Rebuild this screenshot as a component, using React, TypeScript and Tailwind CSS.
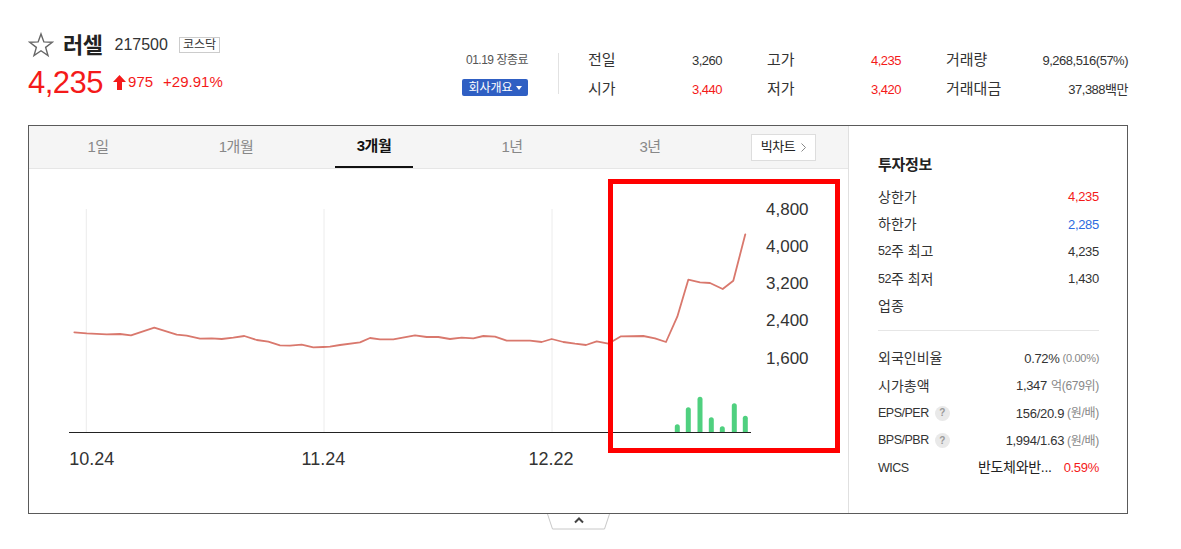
import React from "react"

const LINE =
  "45.3,163.3 57.7,164.3 77.7,165.3 91,165 102,166.3 125.3,158.7 147.7,165.7 157.7,166.7 171,169.7 182.7,169.3 192.7,170 204.3,168.7 215.3,167 227.7,171 239.3,172.7 251,176.3 261,176.7 272.7,175.7 284.3,178.3 294.3,178 301,177.7 311,176 331,173.3 341,169 351,170.3 364.3,170.3 386,166.3 397.7,168 409.3,168 421,170 432.7,168.7 444.3,169.3 454.3,167 466,167.7 477.7,171.7 501,171.7 512.7,173 522.7,170 534.3,173 546,174.7 557,176 567.7,172.3 579.3,174.7 592,167.3 614.3,167 626,169.3 637,173 648.3,147.7 659.3,110.7 671,113.3 681,114 693.7,120 704.3,111.7 716.3,65.3"

const BARS: [number, number][] = [
  [648.3, 255.3],
  [659.3, 238.3],
  [671, 227.7],
  [682.3, 248.3],
  [693.3, 257.3],
  [705.3, 234.3],
  [716.3, 246.7],
]

const Y_LABELS = [
  ["4,800", 40.3],
  ["4,000", 77],
  ["3,200", 114.3],
  ["2,400", 151.7],
  ["1,600", 189.3],
] as const

const X_LABELS = [
  ["10.24", 40.3],
  ["11.24", 272.5],
  ["12.22", 499.5],
] as const

const TABS = ["1일", "1개월", "3개월", "1년", "3년"]

function StarIcon() {
  return (
    <svg width="26" height="26" viewBox="0 0 24 24" className="shrink-0">
      <polygon
        points="12,1.8 14.65,9.16 22.46,9.4 16.28,14.19 18.47,21.7 12,17.3 5.53,21.7 7.72,14.19 1.54,9.4 9.35,9.16"
        fill="none"
        stroke="#666"
        strokeWidth="1.3"
        strokeLinejoin="miter"
      />
    </svg>
  )
}

function UpArrow() {
  return (
    <svg width="13" height="15" viewBox="0 0 13 15" className="shrink-0">
      <path d="M6.5 0 L13 7 H9 V15 H4 V7 H0 Z" fill="#f41a1a" />
    </svg>
  )
}

function Help() {
  return (
    <span className="ml-[6px] inline-flex h-[15px] w-[15px] items-center justify-center rounded-full bg-[#e9e9e9] text-[10px] font-bold leading-none text-[#9a9a9a]">
      ?
    </span>
  )
}

function Stat({ label, value, red, w }: { label: string; value: string; red?: boolean; w: string }) {
  return (
    <div className={`flex h-[29px] items-center justify-between ${w}`}>
      <span className="text-[15px] text-[#333]">{label}</span>
      <span className={`text-[13px] tracking-[-0.5px] ${red ? "text-[#f41a1a]" : "text-[#333]"}`}>
        {value}
      </span>
    </div>
  )
}

function InfoRow({ label, children }: { label: React.ReactNode; children: React.ReactNode }) {
  return (
    <div className="flex h-[27.3px] items-center justify-between text-[13px] text-[#333]">
      <span className="flex items-center text-[14px]">{label}</span>
      <span className="flex items-center tracking-[-0.3px]">{children}</span>
    </div>
  )
}

function Latin({ children }: { children: React.ReactNode }) {
  return <span className="text-[12.5px] tracking-[-0.5px]">{children}</span>
}

export default function App() {
  return (
    <div className="relative h-[549px] w-[1181px] overflow-hidden bg-white font-['Liberation_Sans','Noto_Sans_CJK_KR',sans-serif] text-[#333]">
      <div className="ml-[28px] w-[1100px] pt-[30px]">
        {/* header */}
        <header className="flex h-[95px] justify-between">
          <div className="flex flex-col">
            <div className="flex h-[30px] items-center">
              <StarIcon />
              <span className="ml-[9px] text-[22px] font-bold tracking-[-0.5px] text-[#222]">러셀</span>
              <span className="ml-[12px] text-[16px] text-[#333]">217500</span>
              <span className="ml-[11px] flex h-[16px] items-center border border-[#ccc] px-[3px] text-[12px] leading-none text-[#333]">
                코스닥
              </span>
            </div>
            <div className="mt-[4px] flex h-[36px] items-center text-[#f41a1a]">
              <span className="text-[31px] leading-none tracking-[-0.5px]">4,235</span>
              <span className="ml-[10px] flex items-center">
                <UpArrow />
                <span className="ml-[2px] text-[15px]">975</span>
              </span>
              <span className="ml-[10px] text-[15px]">+29.91%</span>
            </div>
          </div>

          <div className="flex items-start pt-[16px]">
            <div className="flex flex-col items-end">
              <span className="text-[12px] leading-[29px] tracking-[-0.5px] text-[#555]">01.19 장종료</span>
              <button className="mt-[4px] flex h-[17px] w-[66px] items-center justify-center gap-[3px] rounded-[2px] bg-[#2f5fc3] text-[12px] leading-none text-white">
                회사개요
                <svg width="6" height="4" viewBox="0 0 6 4">
                  <path d="M0 0 H6 L3 4 Z" fill="#fff" />
                </svg>
              </button>
            </div>
            <div className="ml-[30px] mt-[7px] h-[41px] w-px bg-[#e2e2e2]" />
            <div className="ml-[29px] flex flex-col">
              <Stat label="전일" value="3,260" w="w-[134px]" />
              <Stat label="시가" value="3,440" red w="w-[134px]" />
            </div>
            <div className="ml-[45px] flex flex-col">
              <Stat label="고가" value="4,235" red w="w-[134px]" />
              <Stat label="저가" value="3,420" red w="w-[134px]" />
            </div>
            <div className="ml-[45px] flex flex-col">
              <Stat label="거래량" value="9,268,516(57%)" w="w-[182px]" />
              <Stat label="거래대금" value="37,388백만" w="w-[182px]" />
            </div>
          </div>
        </header>

        {/* chart box */}
        <section className="flex h-[389px] border border-[#5a5a5a]">
          <div className="flex w-[819px] flex-col">
            <div className="flex h-[43px] items-center border-b border-[#e6e6e6] bg-[#f5f5f5]">
              {TABS.map((t) => (
                <div key={t} className="flex h-full w-[138px] justify-center">
                  {t === "3개월" ? (
                    <div className="flex h-full w-[78px] items-center justify-center border-b-2 border-[#111] text-[15px] font-bold tracking-[-0.5px] text-[#111]">
                      {t}
                    </div>
                  ) : (
                    <div className="flex h-full items-center text-[15px] tracking-[-0.5px] text-[#888]">{t}</div>
                  )}
                </div>
              ))}
              <button className="ml-[32px] flex h-[27px] w-[65px] items-center justify-center gap-[6px] border border-[#ddd] bg-white text-[13px] tracking-[-0.5px] text-[#222]">
                빅차트
                <svg width="5" height="9" viewBox="0 0 5 9">
                  <path d="M0.5 0.5 L4.5 4.5 L0.5 8.5" fill="none" stroke="#888" strokeWidth="1" />
                </svg>
              </button>
            </div>

            <div className="relative flex-1">
              <svg width="819" height="344" viewBox="0 0 819 344" className="block">
                {[57.3, 295, 523].map((x) => (
                  <line key={x} x1={x} y1="40" x2={x} y2="263" stroke="#ececec" strokeWidth="1" />
                ))}
                <polyline
                  points={LINE}
                  fill="none"
                  stroke="#d9786d"
                  strokeWidth="1.8"
                  strokeLinejoin="round"
                  strokeLinecap="round"
                />
                {BARS.map(([x, top]) => (
                  <path
                    key={x}
                    d={`M${x - 2.5} 263 V${top + 2.5} A2.5 2.5 0 0 1 ${x + 2.5} ${top + 2.5} V263 Z`}
                    fill="#4fd07f"
                  />
                ))}
                <line x1="40" y1="263.5" x2="722" y2="263.5" stroke="#222" strokeWidth="1" />
                {Y_LABELS.map(([t, y]) => (
                  <text
                    key={t}
                    x="737"
                    y={y}
                    dominantBaseline="central"
                    fontSize="17"
                    fill="#333"
                    fontFamily="Liberation Sans, sans-serif"
                  >
                    {t}
                  </text>
                ))}
                {X_LABELS.map(([t, x]) => (
                  <text
                    key={t}
                    x={x}
                    y="289.5"
                    dominantBaseline="central"
                    fontSize="18"
                    fill="#333"
                    fontFamily="Liberation Sans, sans-serif"
                  >
                    {t}
                  </text>
                ))}
              </svg>
              <div className="absolute left-[579px] top-[10px] h-[274px] w-[232px] border-[5px] border-[#ff0000]" />
            </div>
          </div>

          <div className="flex-1 border-l border-[#e0e0e0] pl-[29px] pr-[28px] pt-[29px]">
            <div className="h-[20px] text-[15px] font-bold leading-[20px] tracking-[-0.3px] text-[#222]">투자정보</div>
            <div className="mt-[8.6px]">
              <InfoRow label="상한가">
                <span className="text-[#f41a1a]">4,235</span>
              </InfoRow>
              <InfoRow label="하한가">
                <span className="text-[#2c6be0]">2,285</span>
              </InfoRow>
              <InfoRow
                label={
                  <>
                    <Latin>52</Latin>주 최고
                  </>
                }
              >
                4,235
              </InfoRow>
              <InfoRow
                label={
                  <>
                    <Latin>52</Latin>주 최저
                  </>
                }
              >
                1,430
              </InfoRow>
              <InfoRow label="업종">{""}</InfoRow>
            </div>
            <div className="mt-[10px] h-px bg-[#e6e6e6]" />
            <div className="mt-[14px]">
              <InfoRow label="외국인비율">
                0.72%
                <span className="ml-[3px] text-[11px] text-[#888]">(0.00%)</span>
              </InfoRow>
              <InfoRow label="시가총액">
                1,347
                <span className="ml-[4px] text-[12px] text-[#888]">억(679위)</span>
              </InfoRow>
              <InfoRow
                label={
                  <>
                    <Latin>EPS/PER</Latin>
                    <Help />
                  </>
                }
              >
                156/20.9
                <span className="ml-[3px] text-[12px] text-[#888]">(원/배)</span>
              </InfoRow>
              <InfoRow
                label={
                  <>
                    <Latin>BPS/PBR</Latin>
                    <Help />
                  </>
                }
              >
                1,994/1.63
                <span className="ml-[3px] text-[12px] text-[#888]">(원/배)</span>
              </InfoRow>
              <InfoRow label={<Latin>WICS</Latin>}>
                <span className="text-[14px] text-[#222]">반도체와반...</span>
                <span className="ml-[12px] text-[#f41a1a]">0.59%</span>
              </InfoRow>
            </div>
          </div>
        </section>

        {/* collapse toggle */}
        <div className="ml-[519px]">
          <svg width="64" height="16" viewBox="0 0 64 16" className="block">
            <path d="M0.5 0 L5.5 15 H57.5 L62.5 0" fill="#fff" stroke="#c8c8c8" strokeWidth="1" />
            <path d="M28 8.5 L32 4.5 L36 8.5" fill="none" stroke="#444" strokeWidth="2" />
          </svg>
        </div>
      </div>
    </div>
  )
}
